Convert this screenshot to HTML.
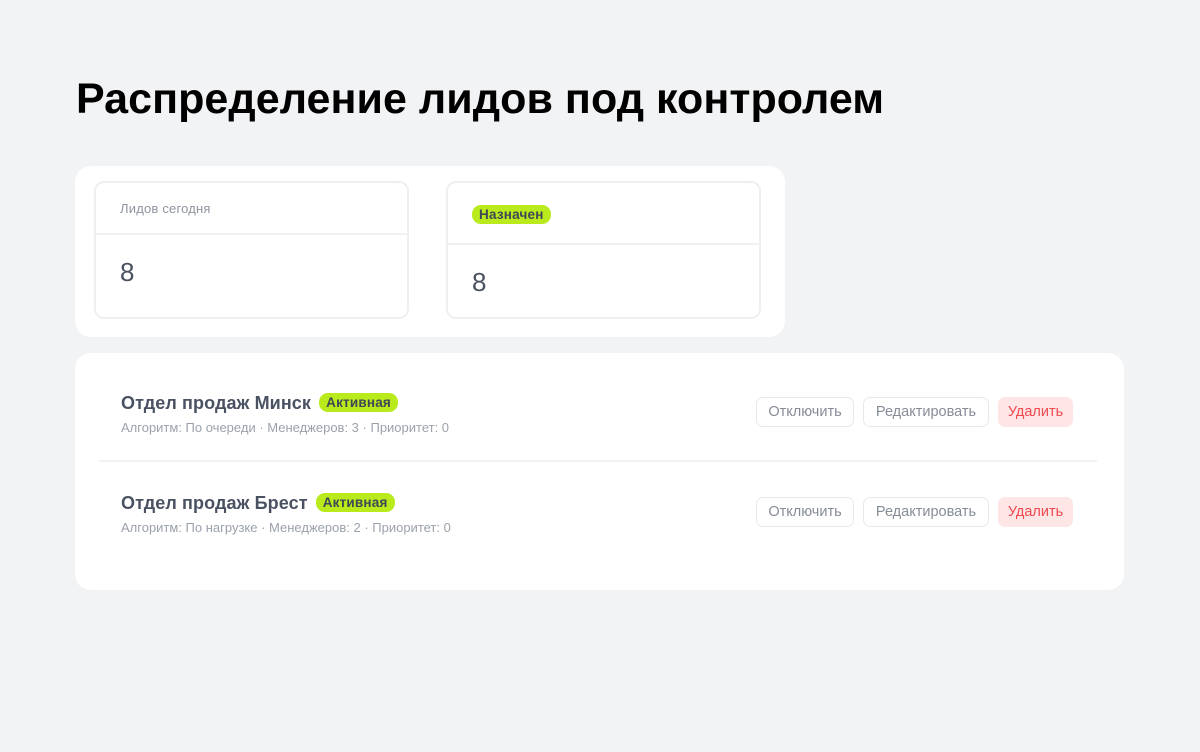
<!DOCTYPE html>
<html><head><meta charset="utf-8"><style>
*{box-sizing:border-box;margin:0;padding:0}
body{width:1200px;height:752px;background:#f2f3f5;font-family:"Liberation Sans",sans-serif;position:relative;overflow:hidden}
.abs{position:absolute}
h1{position:absolute;left:76px;top:75px;font-size:43px;font-weight:700;color:#000;letter-spacing:0.05px;white-space:nowrap}
.card{position:absolute;background:#fff;border-radius:16px}
.in{position:absolute;border:2px solid #eeeff1;border-radius:10px;background:#fff}
.div{position:absolute;left:0;right:0;height:2px;background:#f0f1f3}
.num{position:absolute;font-size:26px;color:#4a5160}
.badge{display:inline-block;background:#b8ea1c;color:#3f4754;font-weight:700;font-size:13.5px;border-radius:9px;padding:2px 7px;line-height:15px;letter-spacing:0.2px}
.t{position:absolute;font-size:18px;font-weight:700;color:#4a5262;white-space:nowrap;letter-spacing:0.1px}
.m{position:absolute;font-size:13px;color:#9ba1ab;white-space:nowrap}
.b{position:absolute;height:30px;border:1.5px solid #e8e9ec;border-radius:7px;font-size:14.5px;color:#868c97;text-align:center;line-height:28px}
.r{border:none;background:#fee6e6;color:#f0494f;line-height:31px}
</style></head><body>
<h1>Распределение лидов под контролем</h1>
<div class="card" style="left:75px;top:166px;width:710px;height:171px">
 <div class="in" style="left:19px;top:15px;width:315px;height:138px">
  <div class="abs" style="left:24px;top:18px;font-size:13px;color:#8e949e;letter-spacing:0.2px">Лидов сегодня</div>
  <div class="div" style="top:50px"></div>
  <div class="num" style="left:24px;top:74px">8</div>
 </div>
 <div class="in" style="left:371px;top:15px;width:315px;height:138px">
  <div class="abs" style="left:24px;top:22px"><span class="badge">Назначен</span></div>
  <div class="div" style="top:60px"></div>
  <div class="num" style="left:24px;top:84px">8</div>
 </div>
</div>
<div class="card" style="left:75px;top:353px;width:1049px;height:237px">
 <div class="t" style="left:46px;top:40px">Отдел продаж Минск <span class="badge" style="margin-left:3px;vertical-align:2px">Активная</span></div>
 <div class="m" style="left:46px;top:67px">Алгоритм: По очереди · Менеджеров: 3 · Приоритет: 0</div>
 <div class="b" style="left:681px;top:44px;width:98px">Отключить</div>
 <div class="b" style="left:788px;top:44px;width:126px">Редактировать</div>
 <div class="b r" style="left:923px;top:44px;width:75px">Удалить</div>
 <div class="abs" style="left:24px;top:107px;width:998px;height:2px;background:#f0f1f3"></div>
 <div class="t" style="left:46px;top:140px">Отдел продаж Брест <span class="badge" style="margin-left:3px;vertical-align:2px">Активная</span></div>
 <div class="m" style="left:46px;top:167px">Алгоритм: По нагрузке · Менеджеров: 2 · Приоритет: 0</div>
 <div class="b" style="left:681px;top:144px;width:98px">Отключить</div>
 <div class="b" style="left:788px;top:144px;width:126px">Редактировать</div>
 <div class="b r" style="left:923px;top:144px;width:75px">Удалить</div>
</div>
</body></html>
